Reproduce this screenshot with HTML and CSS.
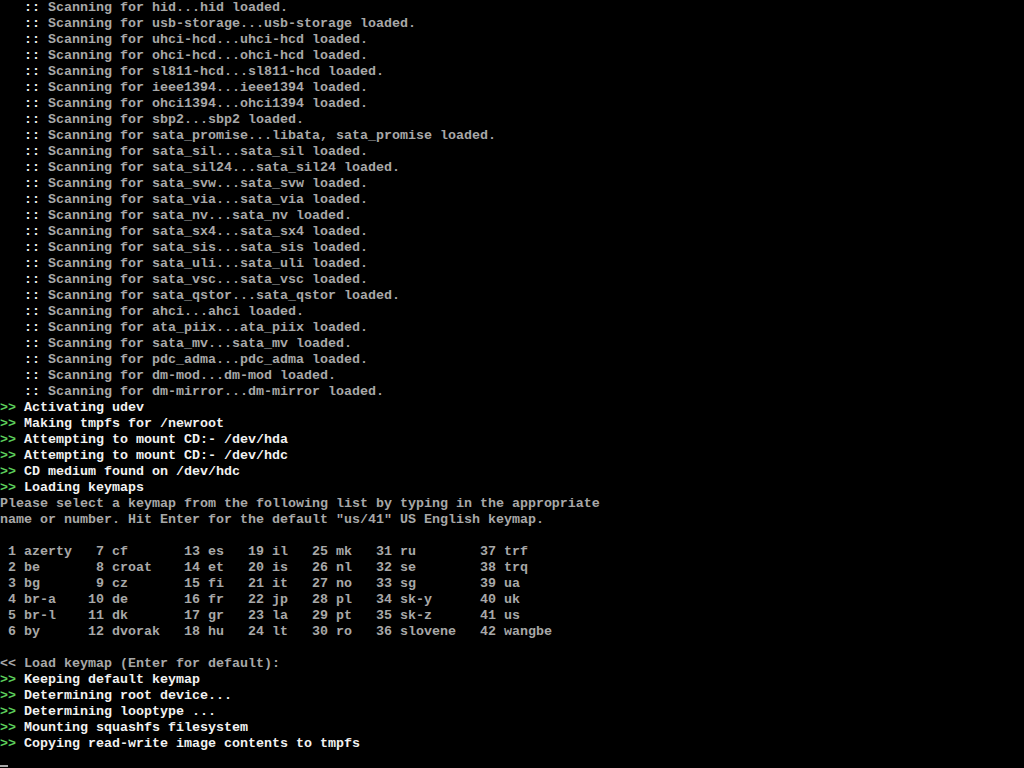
FILE: index.html
```html
<!DOCTYPE html>
<html>
<head>
<meta charset="utf-8">
<link rel="stylesheet" href="styles.css">
</head>
<body>
<pre class="console">   <span class="w">::</span> Scanning for hid...hid loaded.
   <span class="w">::</span> Scanning for usb-storage...usb-storage loaded.
   <span class="w">::</span> Scanning for uhci-hcd...uhci-hcd loaded.
   <span class="w">::</span> Scanning for ohci-hcd...ohci-hcd loaded.
   <span class="w">::</span> Scanning for sl811-hcd...sl811-hcd loaded.
   <span class="w">::</span> Scanning for ieee1394...ieee1394 loaded.
   <span class="w">::</span> Scanning for ohci1394...ohci1394 loaded.
   <span class="w">::</span> Scanning for sbp2...sbp2 loaded.
   <span class="w">::</span> Scanning for sata_promise...libata, sata_promise loaded.
   <span class="w">::</span> Scanning for sata_sil...sata_sil loaded.
   <span class="w">::</span> Scanning for sata_sil24...sata_sil24 loaded.
   <span class="w">::</span> Scanning for sata_svw...sata_svw loaded.
   <span class="w">::</span> Scanning for sata_via...sata_via loaded.
   <span class="w">::</span> Scanning for sata_nv...sata_nv loaded.
   <span class="w">::</span> Scanning for sata_sx4...sata_sx4 loaded.
   <span class="w">::</span> Scanning for sata_sis...sata_sis loaded.
   <span class="w">::</span> Scanning for sata_uli...sata_uli loaded.
   <span class="w">::</span> Scanning for sata_vsc...sata_vsc loaded.
   <span class="w">::</span> Scanning for sata_qstor...sata_qstor loaded.
   <span class="w">::</span> Scanning for ahci...ahci loaded.
   <span class="w">::</span> Scanning for ata_piix...ata_piix loaded.
   <span class="w">::</span> Scanning for sata_mv...sata_mv loaded.
   <span class="w">::</span> Scanning for pdc_adma...pdc_adma loaded.
   <span class="w">::</span> Scanning for dm-mod...dm-mod loaded.
   <span class="w">::</span> Scanning for dm-mirror...dm-mirror loaded.
<span class="g">&gt;&gt;</span> <span class="w">Activating udev</span>
<span class="g">&gt;&gt;</span> <span class="w">Making tmpfs for /newroot</span>
<span class="g">&gt;&gt;</span> <span class="w">Attempting to mount CD:- /dev/hda</span>
<span class="g">&gt;&gt;</span> <span class="w">Attempting to mount CD:- /dev/hdc</span>
<span class="g">&gt;&gt;</span> <span class="w">CD medium found on /dev/hdc</span>
<span class="g">&gt;&gt;</span> <span class="w">Loading keymaps</span>
Please select a keymap from the following list by typing in the appropriate
name or number. Hit Enter for the default "us/41" US English keymap.

 1 azerty   7 cf       13 es   19 il   25 mk   31 ru        37 trf
 2 be       8 croat    14 et   20 is   26 nl   32 se        38 trq
 3 bg       9 cz       15 fi   21 it   27 no   33 sg        39 ua
 4 br-a    10 de       16 fr   22 jp   28 pl   34 sk-y      40 uk
 5 br-l    11 dk       17 gr   23 la   29 pt   35 sk-z      41 us
 6 by      12 dvorak   18 hu   24 lt   30 ro   36 slovene   42 wangbe

&lt;&lt; Load keymap (Enter for default):
<span class="g">&gt;&gt;</span> <span class="w">Keeping default keymap</span>
<span class="g">&gt;&gt;</span> <span class="w">Determining root device...</span>
<span class="g">&gt;&gt;</span> <span class="w">Determining looptype ...</span>
<span class="g">&gt;&gt;</span> <span class="w">Mounting squashfs filesystem</span>
<span class="g">&gt;&gt;</span> <span class="w">Copying read-write image contents to tmpfs</span>
<span class="cursor"></span></pre>
</body>
</html>
```

FILE: styles.css
```css
html, body {
  margin: 0;
  padding: 0;
  background: #000;
  width: 1024px;
  height: 768px;
  overflow: hidden;
}

.console {
  margin: 0;
  padding: 0;
  font-family: "Liberation Mono", "DejaVu Sans Mono", monospace;
  font-size: 13.333px;
  line-height: 16px;
  font-weight: bold;
  color: #a8a8a8;
  white-space: pre;
}

.w {
  color: #f2f2f2;
}

.g {
  color: #5ccf5c;
}

.cursor {
  display: inline-block;
  width: 8px;
  height: 2px;
  background: #a8a8a8;
  vertical-align: -4px;
}
```
